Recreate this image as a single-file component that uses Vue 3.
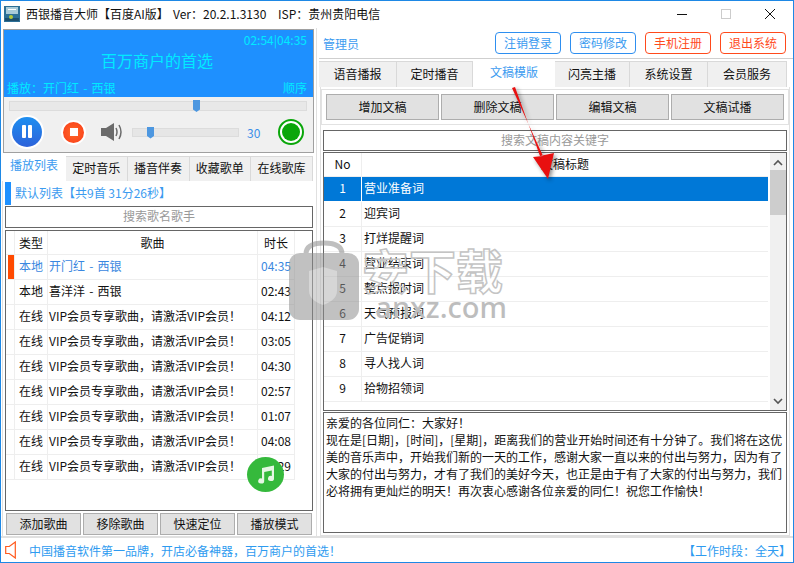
<script setup>
const leftTabs = ['定时音乐', '播音伴奏', '收藏歌单', '在线歌库']
const rightTabs = ['语音播报', '定时播音', '文稿模版', '闪亮主播', '系统设置', '会员服务']
const songs = [
  { type: '本地', name: '开门红 - 西银', time: '04:35', on: true },
  { type: '本地', name: '喜洋洋 - 西银', time: '02:43' },
  { type: '在线', name: 'VIP会员专享歌曲，请激活VIP会员！', time: '04:12' },
  { type: '在线', name: 'VIP会员专享歌曲，请激活VIP会员！', time: '03:05' },
  { type: '在线', name: 'VIP会员专享歌曲，请激活VIP会员！', time: '04:30' },
  { type: '在线', name: 'VIP会员专享歌曲，请激活VIP会员！', time: '02:57' },
  { type: '在线', name: 'VIP会员专享歌曲，请激活VIP会员！', time: '01:07' },
  { type: '在线', name: 'VIP会员专享歌曲，请激活VIP会员！', time: '04:08' },
  { type: '在线', name: 'VIP会员专享歌曲，请激活VIP会员！', time: '03:29' }
]
const docs = ['营业准备词', '迎宾词', '打烊提醒词', '营业结束词', '整点报时词', '天气预报词', '广告促销词', '寻人找人词', '拾物招领词']
const lines = [
  '亲爱的各位同仁：大家好！',
  '现在是[日期]，[时间]，[星期]，距离我们的营业开始时间还有十分钟了。我们将在这优',
  '美的音乐声中，开始我们新的一天的工作，感谢大家一直以来的付出与努力，因为有了',
  '大家的付出与努力，才有了我们的美好今天，也正是由于有了大家的付出与努力，我们',
  '必将拥有更灿烂的明天！再次衷心感谢各位亲爱的同仁！祝您工作愉快！'
]
</script>

<template>
  <div class="win">
    <div class="titlebar">
      <svg class="logo" width="16" height="16" viewBox="0 0 16 16">
        <rect width="16" height="16" fill="#2c6f96" />
        <rect x="2" y="1" width="12" height="7" fill="#a9cbd9" />
        <rect x="4" y="3" width="8" height="1" fill="#fff" />
        <rect x="1" y="12" width="14" height="3" fill="#1c4f6e" />
        <circle cx="7" cy="11" r="2" fill="#b5c93a" />
      </svg>
      <span class="apptitle">西银播音大师【百度AI版】</span>
      <span class="ver">Ver：20.2.1.3130</span>
      <span class="isp">ISP：贵州贵阳电信</span>
      <div class="winbtns">
        <svg width="12" height="12" viewBox="0 0 12 12"><path d="M1 6.5h10" stroke="#111" /></svg>
        <svg width="12" height="12" viewBox="0 0 12 12"><rect x="1.5" y="1.5" width="9" height="9" fill="none" stroke="#ccc" /></svg>
        <svg width="12" height="12" viewBox="0 0 12 12"><path d="M1 1l10 10M11 1L1 11" stroke="#111" /></svg>
      </div>
    </div>

    <div class="main">
      <div class="left">
        <div class="player">
          <div class="screen">
            <div class="clock">02:54|04:35</div>
            <div class="slogan">百万商户的首选</div>
            <div class="nowline"><span>播放：开门红 - 西银</span><span>顺序</span></div>
          </div>
          <div class="seek"><i class="thumb" style="left: 183px"></i></div>
          <div class="controls">
            <div class="pause">
              <svg width="30" height="30" viewBox="0 0 30 30">
                <defs><linearGradient id="pg" x1="0" y1="0" x2="0" y2="1"><stop offset="0" stop-color="#1e8ff0" /><stop offset="1" stop-color="#2d62da" /></linearGradient></defs>
                <circle cx="15" cy="15" r="15" fill="url(#pg)" />
                <rect x="10" y="8" width="4" height="13" rx="1" fill="#fff" />
                <rect x="16" y="8" width="4" height="13" rx="1" fill="#fff" />
              </svg>
            </div>
            <div class="stop"><b></b></div>
            <svg class="speaker" width="22" height="20" viewBox="0 0 22 20">
              <path d="M0 6h5l8-5v18l-8-5H0z" fill="#6b6b6b" />
              <path d="M15 6q2 4 0 8M18 3q4 7 0 14" fill="none" stroke="#6b6b6b" stroke-width="1.5" />
            </svg>
            <div class="vol"><i class="thumb" style="left: 14px"></i></div>
            <span class="volnum">30</span>
            <div class="led"><b></b></div>
          </div>
        </div>

        <div class="tabs ltabs">
          <div class="tab active">播放列表</div>
          <div v-for="t in leftTabs" :key="t" class="tab">{{ t }}</div>
        </div>

        <div class="lpanel">
          <div class="listhead"><i></i>默认列表【共9首 31分26秒】</div>
          <div class="search">搜索歌名歌手</div>
          <div class="songs">
            <div class="srow shead">
              <span class="mark"></span><span class="c1">类型</span><span class="c2 center">歌曲</span><span class="c3 center">时长</span>
            </div>
            <div v-for="(s, i) in songs" :key="i" class="srow" :class="{ on: s.on }">
              <span class="mark"><i v-if="s.on"></i></span>
              <span class="c1">{{ s.type }}</span>
              <span class="c2">{{ s.name }}</span>
              <span class="c3">{{ s.time }}</span>
            </div>
          </div>
          <div class="btnrow">
            <button>添加歌曲</button><button>移除歌曲</button><button>快速定位</button><button>播放模式</button>
          </div>
        </div>
      </div>

      <div class="right">
        <div class="userbar">
          <span class="admin">管理员</span>
          <div class="ubtns">
            <span class="ubtn">注销登录</span>
            <span class="ubtn">密码修改</span>
            <span class="ubtn red">手机注册</span>
            <span class="ubtn red">退出系统</span>
          </div>
        </div>

        <div class="tabs rtabs">
          <div v-for="t in rightTabs" :key="t" class="tab" :class="{ active: t === '文稿模版' }">{{ t }}</div>
        </div>

        <div class="rpanel">
          <div class="toolbar">
            <button>增加文稿</button><button>删除文稿</button><button>编辑文稿</button><button>文稿试播</button>
          </div>
          <div class="search rsearch">搜索文稿内容关键字</div>
          <div class="docs">
            <div class="doclist">
              <div class="drow dhead"><span class="no">No</span><span class="dt dcenter">文稿标题</span></div>
              <div v-for="(d, i) in docs" :key="d" class="drow" :class="{ sel: i === 0 }">
                <span class="no">{{ i + 1 }}</span><span class="dt">{{ d }}</span>
              </div>
            </div>
            <div class="scroll">
              <svg width="10" height="7" viewBox="0 0 10 7"><path d="M1 6l4-4 4 4" fill="none" stroke="#555" stroke-width="1.6" /></svg>
              <div class="scrollthumb"></div>
              <svg class="down" width="10" height="7" viewBox="0 0 10 7"><path d="M1 1l4 4 4-4" fill="none" stroke="#555" stroke-width="1.6" /></svg>
            </div>
          </div>
          <div class="content">
            <div v-for="l in lines" :key="l">{{ l }}</div>
          </div>
        </div>
      </div>
    </div>

    <div class="status">
      <svg width="11" height="18" viewBox="0 0 11 18"><path d="M0.7 5.5h3.6l6-4.5v16l-6-4.5H0.7z" fill="none" stroke="#ff5a1e" stroke-width="1.2" /></svg>
      <span class="marquee">中国播音软件第一品牌，开店必备神器，百万商户的首选！</span>
      <span class="worktime">【工作时段：全天】</span>
    </div>

    <!-- things that sit on top of the window -->
    <div class="music">
      <svg width="22" height="22" viewBox="0 0 22 22"><path d="M7 4l12-2.5v13a3 2.6 0 1 1-2.2-2.5V6.5L9.2 8v9a3 2.6 0 1 1-2.2-2.5z" fill="#e6f6e4" /></svg>
    </div>
    <svg class="lock" width="70" height="80" viewBox="0 0 70 80">
      <path d="M17 18V14Q17 3 35 3T53 14V18" fill="none" stroke="#8c8c8c" stroke-width="5" />
      <rect x="0" y="13" width="70" height="67" rx="11" fill="#8f8f8f" />
      <path d="M20 31l14-4 14 4v20q0 9-14 14-14-5-14-14z" fill="#b5b5b5" />
    </svg>
    <div class="wm">
      <div class="wmcn">安下载</div>
      <div class="wmen">anxz.com</div>
    </div>
    <svg class="arrow" width="70" height="100" viewBox="0 0 70 100">
      <path d="M12 3l3-1 25 69 14-3-6 26-15-22 10-1z" fill="#e81010" />
    </svg>
  </div>
</template>

<style scoped>
.win {
  position: relative;
  width: 794px;
  height: 563px;
  box-sizing: border-box;
  border: 1px solid #1e88e5;
  background: #fff;
  font-family: "Noto Sans CJK SC", "Noto Sans", sans-serif;
  font-size: 12px;
  color: #111;
  overflow: hidden;
  display: flex;
  flex-direction: column;
}
.titlebar {
  height: 27px;
  box-sizing: border-box;
  display: flex;
  align-items: center;
  padding: 0 0 2px 3px;
  flex: none;
}
.logo { margin-right: 6px; }
.apptitle { width: 147px; white-space: nowrap; }
.ver { width: 105px; white-space: nowrap; }
.isp { white-space: nowrap; }
.winbtns {
  margin-left: auto;
  display: flex;
  gap: 32px;
  padding-right: 17px;
}
.main {
  height: 510px;
  display: flex;
  background: #fff;
  flex: none;
  box-sizing: border-box;
  border-bottom: 2px solid #e0e0e0;
}
.left { width: 316px; flex: none; border-right: 2px solid #fff; box-shadow: inset -1px 0 0 #e0e0e0; }
.player {
  margin: 1px 0 0 2px;
  width: 311px;
  height: 124px;
  box-sizing: border-box;
  border: 1px solid #a0a0a0;
  background: #f0f0f0;
}
.screen {
  background: #1e90ff;
  color: #00ebff;
  height: 67px;
  box-sizing: border-box;
  padding: 1px 6px 0 3px;
  display: flex;
  flex-direction: column;
}
.clock { text-align: right; font-size: 12px; line-height: 17px; }
.slogan { text-align: center; font-size: 16px; line-height: 24px; }
.nowline { display: flex; justify-content: space-between; line-height: 18px; margin-top: auto; word-spacing: 1.5px; }
.seek {
  position: relative;
  height: 8px;
  margin: 4px 6px 0 5px;
  background: #e8e8e8;
  border: 1px solid #dcdcdc;
}
.thumb {
  position: absolute;
  top: -2px;
  width: 7px;
  height: 12px;
  background: #4d97e0;
  clip-path: polygon(0 0, 100% 0, 100% 80%, 50% 100%, 0 80%);
}
.controls {
  display: flex;
  align-items: center;
  height: 40px;
  margin-top: 1px;
  padding-left: 6px;
}
.pause {
  width: 34px;
  height: 34px;
  background: #fff;
  border-radius: 50%;
  display: flex;
  align-items: center;
  justify-content: center;
}
.stop {
  width: 25px;
  height: 25px;
  margin-left: 17px;
  border-radius: 50%;
  background: radial-gradient(#ff6a2a, #f93a18);
  border: 2px solid #fff;
  box-sizing: border-box;
  display: flex;
  align-items: center;
  justify-content: center;
}
.stop b { width: 8px; height: 8px; background: #fff; }
.speaker { margin-left: 15px; }
.vol {
  position: relative;
  width: 105px;
  height: 7px;
  margin-left: 9px;
  background: #e6e6e6;
  border: 1px solid #dcdcdc;
}
.volnum { color: #3b8fe8; margin-left: 8px; width: 20px; }
.led {
  margin-left: 11px;
  width: 26px;
  height: 26px;
  box-sizing: border-box;
  border: 2px solid #0aa60a;
  border-radius: 50%;
  padding: 2px;
  background: #fff;
}
.led b { display: block; width: 100%; height: 100%; border-radius: 50%; background: #0aa60a; }

.tabs { display: flex; align-items: flex-end; }
.tab {
  box-sizing: border-box;
  text-align: center;
  background: #f0f0f0;
  border: 1px solid #d9d9d9;
  border-left: none;
  border-bottom: none;
}
.tab.active { background: #fff; color: #3b9bf0; border: none; }
.ltabs { margin: 1px 0 0 1px; width: 311px; height: 27px; }
.ltabs .tab { flex: 1; height: 25px; line-height: 22px; }
.ltabs .tab.active { flex: none; width: 64px; height: 27px; line-height: 21px; }

.lpanel {
  margin-left: 1px;
  width: 312px;
  height: 355px;
  box-sizing: border-box;
  padding: 1px 0 0 2px;
  background: #fff;
  border-left: 1px solid #e0e0e0;
}
.listhead {
  display: flex;
  align-items: flex-start;
  height: 23px;
  line-height: 21px;
  color: #3b9bf0;
  font-size: 12px;
}
.listhead i { width: 6px; height: 23px; background: #1e90ff; margin-right: 4px; }
.search {
  border: 1px solid #666;
  background: #fff;
  color: #999;
  text-align: center;
  box-sizing: border-box;
}
.lpanel .search { width: 308px; height: 22px; line-height: 18px; margin-top: 1px; }
.songs {
  height: 281px;
  width: 308px;
  box-sizing: border-box;
  border: 1px solid #666;
  background: #fff;
  margin-top: 2px;
}
.srow { display: flex; height: 25px; line-height: 22px; width: 289px; border-bottom: 1px solid #eee; box-sizing: border-box; }
.shead { height: 24px; line-height: 24px; }
.srow span { flex: none; border-right: 1px solid #eee; box-sizing: border-box; white-space: nowrap; overflow: hidden; }
.mark { width: 9px; }
.mark i { display: block; margin-left: 2px; width: 6px; height: 24px; background: #ff4a00; }
.c1 { width: 33px; padding-left: 4px; }
.c2 { width: 210px; padding-left: 1px; word-spacing: 1.5px; }
.c3 { width: 37px; padding-left: 3px; }
.srow .center { text-align: center; padding-left: 0; }
.on { color: #3a87e0; }
.btnrow { display: flex; gap: 2px; margin: 2px 0 0 1px; }
.btnrow button {
  width: 75px;
  flex: none;
  height: 22px;
  background: #e1e1e1;
  border: 1px solid #adadad;
  font: inherit;
  padding: 0 0 1px;
  color: #111;
}
.right { flex: 1; min-width: 0; }
.userbar {
  height: 31px;
  background: #fff;
  display: flex;
  align-items: center;
  padding-left: 4px;
  border-bottom: 1px solid #cfcfcf;
  box-sizing: border-box;
}
.admin { color: #3b9bf0; }
.ubtns { margin-left: auto; display: flex; gap: 9px; padding-right: 7px; }
.ubtn {
  width: 66px;
  height: 22px;
  line-height: 20px;
  box-sizing: border-box;
  text-align: center;
  border: 1px solid #2e8ff0;
  border-radius: 4px;
  color: #3b9bf0;
}
.ubtn.red { border-color: #ff4a1c; color: #ff4a1c; }
.rtabs { height: 28px; }
.rtabs .tab { height: 26px; line-height: 23px; width: 78px; flex: none; }
.rtabs .tab:nth-child(2) { width: 76px; }
.rtabs .tab:nth-child(4) { width: 75px; }
.rtabs .tab:nth-child(6) { width: 79px; }
.rtabs .tab.active { height: 28px; width: 82px; line-height: 25px; }
.rpanel {
  background: #fff;
  width: 470px;
  margin-left: 1px;
  height: 449px;
  box-sizing: border-box;
  padding: 2px 0 0 0;
  border: 1px solid #e0e0e0;
  border-top: none;
}
.toolbar {
  display: flex;
  gap: 2px;
  padding: 4px;
  height: 36px;
  box-sizing: border-box;
  background: #fff;
  border: 1px solid #e2e2e2;
}
.toolbar button {
  width: 113px;
  height: 26px;
  flex: none;
  background: #e1e1e1;
  border: 1px solid #adadad;
  font: inherit;
  padding: 0 0 2px;
  color: #111;
}
.rsearch { height: 21px; margin: 5px 2px 0; line-height: 17px; }
.docs {
  display: flex;
  height: 259px;
  box-sizing: border-box;
  border: 1px solid #666;
  margin: 1px 2px 0;
  background: #fff;
}
.doclist { flex: 1; min-width: 0; }
.drow { display: flex; height: 25px; line-height: 22px; border-bottom: 1px solid #eee; box-sizing: border-box; }
.dhead { height: 24px; }
.no { width: 38px; text-align: center; border-right: 1px solid #eee; box-sizing: border-box; flex: none; }
.dt { flex: 1; padding-left: 2px; }
.dcenter { text-align: center; padding-left: 0; }
.sel { background: #0078d7; color: #fff; border-bottom: 1px solid #fff; }
.sel .no { border-right-color: #fff; }
.scroll {
  width: 16px;
  background: #f0f0f0;
  display: flex;
  flex-direction: column;
  align-items: center;
  flex: none;
  margin-left: 2px;
  padding-top: 6px;
  box-sizing: border-box;
}
.scrollthumb { width: 100%; height: 45px; background: #cdcdcd; margin-top: 4px; }
.down { margin-top: auto; margin-bottom: 5px; }
.content {
  height: 121px;
  margin: 1px 2px 0;
  box-sizing: border-box;
  border: 1px solid #666;
  background: #fff;
  padding: 1px 2px;
  line-height: 17px;
  white-space: nowrap;
  overflow: hidden;
}
.status {
  height: 23px;
  flex: none;
  box-sizing: border-box;
  display: flex;
  align-items: center;
  padding: 1px 2px 0 4px;
  background: #fff;
}
.marquee { color: #2e9bf0; margin-left: 13px; }
.worktime { margin-left: auto; color: #2e9bf0; }

.music {
  position: absolute;
  left: 246px;
  top: 456px;
  width: 37px;
  height: 35px;
  border-radius: 50%;
  background: #35b93c;
  display: flex;
  align-items: center;
  justify-content: center;
}
.lock {
  position: absolute;
  left: 288px;
  top: 239px;
  opacity: 0.55;
  pointer-events: none;
}
.wm {
  position: absolute;
  left: 361px;
  top: 245px;
  width: 145px;
  pointer-events: none;
  font-family: "Noto Sans", "Noto Sans CJK SC", sans-serif;
}
.wmcn { font-size: 47px; line-height: 50px; font-weight: 700; color: transparent; -webkit-text-stroke: 1.5px #c4c4c4; white-space: nowrap; }
.wmen { font-size: 29px; line-height: 24px; color: #bdbdbd; white-space: nowrap; text-align: right; margin-top: -1px; font-weight: 500; }
.arrow {
  position: absolute;
  left: 499px;
  top: 84px;
  pointer-events: none;
  filter: drop-shadow(2px 2px 2px rgba(0, 0, 0, 0.45));
}
</style>

<style>
html, body { margin: 0; padding: 0; background: #fff; }
</style>
